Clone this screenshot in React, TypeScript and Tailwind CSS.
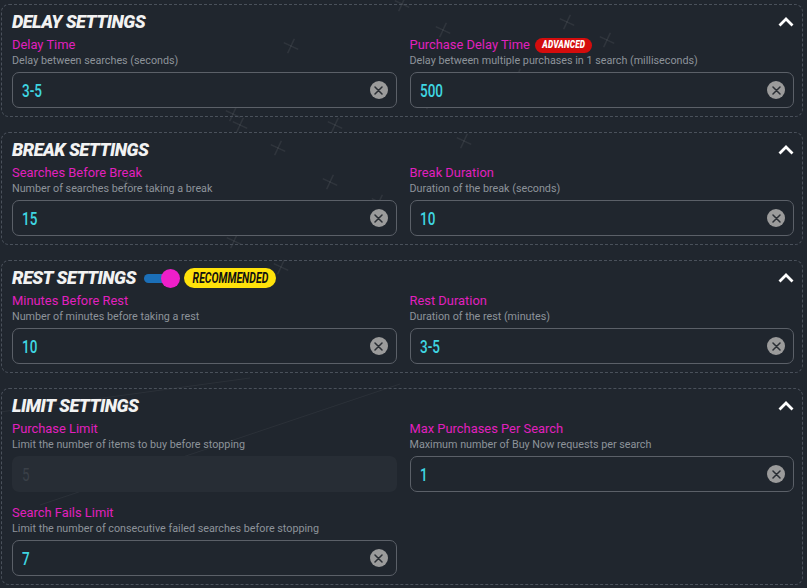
import React from "react";

const crosses: [number, number][] = [
  [183, 88], [233, 114], [291, 46], [402, 4], [443, 30], [567, 22], [607, 40],
  [517, 76], [557, 96], [430, 102], [278, 148], [330, 182], [379, 202], [178, 213],
  [234, 241], [281, 267], [464, 141], [126, 182], [335, 125], [240, 125], [820, 5],
];

function Background() {
  return (
    <svg className="absolute inset-0 pointer-events-none" width="807" height="588">
      {crosses.map(([x, y], i) => (
        <g key={i} transform={`translate(${x} ${y}) rotate(25)`} stroke="rgba(255,255,255,0.07)" strokeWidth="1.6">
          <line x1="-8" y1="0" x2="8" y2="0" />
          <line x1="0" y1="-8" x2="0" y2="8" />
        </g>
      ))}
      <line x1="0" y1="412" x2="250" y2="378" stroke="rgba(255,255,255,0.05)" strokeWidth="1" />
      <line x1="40" y1="505" x2="400" y2="384" stroke="rgba(255,255,255,0.05)" strokeWidth="1" />
    </svg>
  );
}

function Chevron() {
  return (
    <svg width="16" height="10" viewBox="0 0 16 10">
      <polyline points="1.5,8.5 8,2 14.5,8.5" fill="none" stroke="#ffffff" strokeWidth="2.8" strokeLinejoin="miter" />
    </svg>
  );
}

function ClearBtn() {
  return (
    <div className="w-[18px] h-[18px] rounded-full bg-[#9b9b9b] flex items-center justify-center shrink-0">
      <svg width="9" height="9" viewBox="0 0 9 9">
        <path d="M1 1 L8 8 M8 1 L1 8" stroke="#2b2f35" strokeWidth="1.5" strokeLinecap="round" />
      </svg>
    </div>
  );
}

type FieldProps = {
  label: string;
  desc: string;
  value: string;
  badge?: React.ReactNode;
  disabled?: boolean;
};

function Field({ label, desc, value, badge, disabled }: FieldProps) {
  return (
    <div className="flex flex-col min-w-0">
      <div className="flex items-center gap-[5px] h-[18px]">
        <span className="text-[12.9px] leading-[18px] text-[#e020be]">{label}</span>
        {badge}
      </div>
      <div className="text-[10.75px] leading-[14px] text-[#8d939a] whitespace-nowrap">{desc}</div>
      {disabled ? (
        <div className="mt-[4px] h-[36px] rounded-[7px] bg-[#272d35] flex items-center pl-[10px]">
          <span className="inline-block origin-left scale-x-[0.75] text-[18px] text-[#3a4048]">{value}</span>
        </div>
      ) : (
        <div className="mt-[4px] h-[36px] rounded-[7px] border border-[#5b6068] bg-[#20262e] flex items-center justify-between pl-[9px] pr-[8px]">
          <span className="inline-block origin-left scale-x-[0.75] text-[18px] font-medium text-[#3fd6e2]">{value}</span>
          <ClearBtn />
        </div>
      )}
    </div>
  );
}

function Section({ title, extra, children }: { title: string; extra?: React.ReactNode; children: React.ReactNode }) {
  return (
    <div className="rounded-[8px] border border-dashed border-[#4a515b] pl-[10px] pr-[8px] pt-[4px] pb-[8px]">
      <div className="h-[26px] flex items-center justify-between">
        <div className="flex items-center">
          <span className="inline-block text-[18px] font-black italic text-[#f2f2f2] tracking-[-0.5px] leading-[26px]">
            {title}
          </span>
          {extra}
        </div>
        <Chevron />
      </div>
      <div className="mt-[1px] grid grid-cols-2 gap-x-[13px] gap-y-[12px]">{children}</div>
    </div>
  );
}

function Advanced() {
  return (
    <span className="h-[15px] w-[57px] rounded-full bg-[#d40d0d] flex items-center justify-center overflow-hidden">
      <span className="inline-block scale-x-[0.72] text-[11.5px] font-black italic text-white leading-none tracking-[0.2px]">ADVANCED</span>
    </span>
  );
}

function RestExtra() {
  return (
    <div className="flex items-center ml-[8px]">
      <div className="relative w-[36px] h-[19px] flex items-center">
        <div className="w-[30px] h-[9px] rounded-full bg-[#1b6fb8]" />
        <div className="absolute left-[17px] top-0 w-[19px] h-[19px] rounded-full bg-[#ee1fc9]" />
      </div>
      <span className="ml-[4px] h-[20px] w-[92px] rounded-full bg-[#ffe20a] flex items-center justify-center overflow-hidden">
        <span className="inline-block scale-x-[0.75] text-[14px] font-bold italic text-[#111] leading-none">RECOMMENDED</span>
      </span>
    </div>
  );
}

export default function App() {
  return (
    <div className="relative w-[807px] h-[588px] overflow-hidden bg-[#20262e] font-['Roboto',sans-serif]">
      <Background />
      <div className="relative flex flex-col gap-[15px] pt-[4px] pl-[1px] w-[803px]">
        <Section title="DELAY SETTINGS">
          <Field label="Delay Time" desc="Delay between searches (seconds)" value="3-5" />
          <Field
            label="Purchase Delay Time"
            desc="Delay between multiple purchases in 1 search (milliseconds)"
            value="500"
            badge={<Advanced />}
          />
        </Section>
        <Section title="BREAK SETTINGS">
          <Field label="Searches Before Break" desc="Number of searches before taking a break" value="15" />
          <Field label="Break Duration" desc="Duration of the break (seconds)" value="10" />
        </Section>
        <Section title="REST SETTINGS" extra={<RestExtra />}>
          <Field label="Minutes Before Rest" desc="Number of minutes before taking a rest" value="10" />
          <Field label="Rest Duration" desc="Duration of the rest (minutes)" value="3-5" />
        </Section>
        <Section title="LIMIT SETTINGS">
          <Field label="Purchase Limit" desc="Limit the number of items to buy before stopping" value="5" disabled />
          <Field label="Max Purchases Per Search" desc="Maximum number of Buy Now requests per search" value="1" />
          <Field
            label="Search Fails Limit"
            desc="Limit the number of consecutive failed searches before stopping"
            value="7"
          />
        </Section>
      </div>
    </div>
  );
}
